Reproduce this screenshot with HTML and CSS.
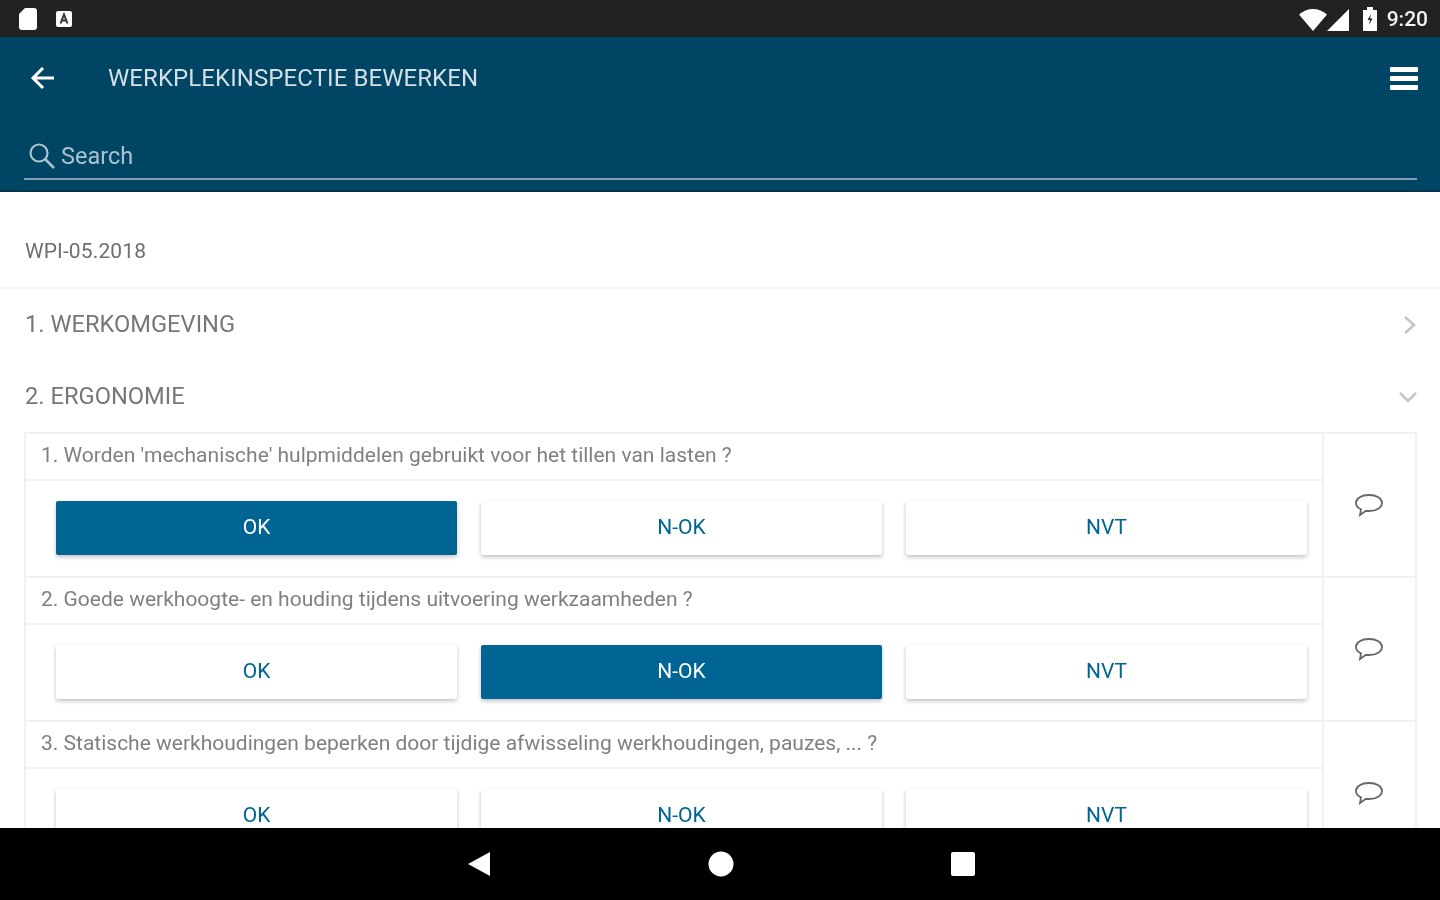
FILE: index.html
```html
<!DOCTYPE html>
<html lang="en">
<head>
    <meta charset="UTF-8">
    <meta name="viewport" content="width=device-width, initial-scale=1.0">
    <title>Werkplekinspectie bewerken</title>
    <link rel="stylesheet" href="styles.css">
</head>
<body>

    <div class="status-bar">
        <div class="status-left">
            <svg width="22" height="24" viewBox="0 0 22 24"><path d="M8 1h9a3 3 0 0 1 3 3v16a3 3 0 0 1-3 3H5a3 3 0 0 1-3-3V7z" fill="#fff"/></svg>
            <svg width="20" height="20" viewBox="0 0 20 20"><rect x="2" y="2" width="16" height="16" rx="2" fill="#fff"/><path d="M6.500 14.500 10 5.500l3.500 9M8 11.500h4" fill="none" stroke="#333" stroke-width="2"/></svg>
        </div>
        <div class="status-right">
            <svg width="30" height="24" viewBox="0 0 30 24"><path d="M1 7.500C9 0 21 0 29 7.500L15 24z" fill="#fff"/></svg>
            <svg class="signal-icon" width="24" height="24" viewBox="0 0 24 24"><path d="M1 24 23 2v22z" fill="#fff"/></svg>
            <svg class="battery-icon" width="18" height="26" viewBox="0 0 18 26"><path d="M6 1h6v3h4v21H2V4h4z" fill="#fff"/><path d="M10 8 6.500 14H9l-1 5 3.500-6.500H9z" fill="#222"/></svg>
            <span class="clock">9:20</span>
        </div>
    </div>

    <header class="app-header">
        <div class="title-row">
            <svg class="back-icon" width="26" height="26" viewBox="0 0 26 26"><path d="M24 13H3M13 3 3 13l10 10" fill="none" stroke="#fff" stroke-width="3"/></svg>
            <h1>WERKPLEKINSPECTIE BEWERKEN</h1>
            <div class="menu-icon"><span></span><span></span><span></span></div>
        </div>
        <div class="search-row">
            <svg width="28" height="28" viewBox="0 0 28 28"><circle cx="11" cy="11" r="8.500" fill="none" stroke="#a9c3d0" stroke-width="2.200"/><path d="m17 17 9 9" stroke="#a9c3d0" stroke-width="2.600"/></svg>
            <span>Search</span>
        </div>
    </header>

    <main class="content">
        <div class="form-code">WPI-05.2018</div>

        <div class="section-row">
            <span class="section-name">1. WERKOMGEVING</span>
            <svg width="14" height="20" viewBox="0 0 14 20"><path d="m2 2 9 8-9 8" fill="none" stroke="#c4c4c4" stroke-width="2.500"/></svg>
        </div>
        <div class="section-row">
            <span class="section-name">2. ERGONOMIE</span>
            <svg class="chevron-down" width="20" height="14" viewBox="0 0 20 14"><path d="m2 3 8 8 8-8" fill="none" stroke="#c4c4c4" stroke-width="2.500"/></svg>
        </div>

        <div class="question-list">
            <div class="question">
                <div class="question-main">
                    <div class="question-text">1. Worden 'mechanische' hulpmiddelen gebruikt voor het tillen van lasten ?</div>
                    <div class="answers">
                        <button class="answer selected">OK</button>
                        <button class="answer">N-OK</button>
                        <button class="answer">NVT</button>
                    </div>
                </div>
                <div class="question-comment">
                    <svg width="32" height="28" viewBox="0 0 32 28"><path d="M16 3C8.500 3 3 6.500 3 11c0 2.800 2 5 5 6.300L7 23l6-4.200c1 .2 2 .2 3 .2 7.500 0 13-3.500 13-8s-5.500-8-13-8z" fill="none" stroke="#666" stroke-width="1.800"/></svg>
                </div>
            </div>
            <div class="question">
                <div class="question-main">
                    <div class="question-text">2. Goede werkhoogte- en houding tijdens uitvoering werkzaamheden ?</div>
                    <div class="answers">
                        <button class="answer">OK</button>
                        <button class="answer selected">N-OK</button>
                        <button class="answer">NVT</button>
                    </div>
                </div>
                <div class="question-comment">
                    <svg width="32" height="28" viewBox="0 0 32 28"><path d="M16 3C8.500 3 3 6.500 3 11c0 2.800 2 5 5 6.300L7 23l6-4.200c1 .2 2 .2 3 .2 7.500 0 13-3.500 13-8s-5.500-8-13-8z" fill="none" stroke="#666" stroke-width="1.800"/></svg>
                </div>
            </div>
            <div class="question">
                <div class="question-main">
                    <div class="question-text">3. Statische werkhoudingen beperken door tijdige afwisseling werkhoudingen, pauzes, ... ?</div>
                    <div class="answers">
                        <button class="answer">OK</button>
                        <button class="answer">N-OK</button>
                        <button class="answer">NVT</button>
                    </div>
                </div>
                <div class="question-comment">
                    <svg width="32" height="28" viewBox="0 0 32 28"><path d="M16 3C8.500 3 3 6.500 3 11c0 2.800 2 5 5 6.300L7 23l6-4.200c1 .2 2 .2 3 .2 7.500 0 13-3.500 13-8s-5.500-8-13-8z" fill="none" stroke="#666" stroke-width="1.800"/></svg>
                </div>
            </div>
        </div>
    </main>

    <nav class="nav-bar">
        <svg width="24" height="26" viewBox="0 0 24 26"><path d="M23 1v24L1 13z" fill="#fff"/></svg>
        <svg width="26" height="26" viewBox="0 0 26 26"><circle cx="13" cy="13" r="12.500" fill="#fff"/></svg>
        <svg width="24" height="24" viewBox="0 0 24 24"><rect x="0" y="0" width="24" height="24" rx="2" fill="#fff"/></svg>
    </nav>

</body>
</html>
```

FILE: styles.css
```css
* {
    margin: 0;
    padding: 0;
    box-sizing: border-box;
    font-family: Roboto, "Liberation Sans", sans-serif;
}

body {
    width: 1440px;
    height: 900px;
    display: flex;
    flex-direction: column;
    overflow: hidden;
    background-color: #fff;
    /* the reference is an upscaled, soft screenshot */
    filter: blur(0.6px);
}

svg {
    display: block;
    flex-shrink: 0;
}

/* status bar */
.status-bar {
    height: 37px;
    flex-shrink: 0;
    display: flex;
    justify-content: space-between;
    align-items: center;
    padding: 0 12px 0 17px;
    background-color: #222;
}

.status-left,
.status-right {
    display: flex;
    align-items: center;
}

.status-left {
    gap: 15px;
}

.signal-icon {
    margin-left: -2px;
}

.battery-icon {
    margin-left: 11px;
}

.clock {
    margin-left: 8px;
    font-size: 21px;
    font-weight: 500;
    color: #f2f2f2;
}

/* header */
.app-header {
    height: 155px;
    flex-shrink: 0;
    display: flex;
    flex-direction: column;
    background-color: #004563;
    border-bottom: 2px solid #00334c;
}

.title-row {
    height: 82px;
    display: flex;
    align-items: center;
    padding: 0 22px 0 30px;
}

.back-icon {
    margin-right: 52px;
}

.title-row h1 {
    flex: 1;
    font-size: 24px;
    font-weight: 400;
    letter-spacing: 0.08px;
    color: #d4dfe6;
}

.menu-icon {
    width: 28px;
    display: flex;
    flex-direction: column;
    gap: 4px;
}

.menu-icon span {
    height: 5px;
    border-radius: 1px;
    background-color: #fff;
}

.search-row {
    height: 61px;
    margin: 0 23px 0 24px;
    padding: 14px 0 0 4px;
    display: flex;
    align-items: center;
    gap: 5px;
    border-bottom: 2px solid #7fa2b3;
    font-size: 23.5px;
    color: #a9c3d0;
}

/* content */
.content {
    flex: 1;
    overflow: hidden;
    background-color: #fff;
}

.form-code {
    height: 97px;
    display: flex;
    align-items: center;
    padding: 22px 0 0 25px;
    border-bottom: 2px solid #f4f4f4;
    font-size: 21px;
    letter-spacing: 0.12px;
    color: #6f6f6f;
}

.section-row {
    height: 72px;
    display: flex;
    justify-content: space-between;
    align-items: center;
    padding: 0 23px 0 25px;
    font-size: 23.7px;
    color: #777;
}

.section-name {
    margin-bottom: 2px;
}

.chevron-down {
    margin-right: -1px;
}

.question-list {
    margin: -1px 23px 0 24px;
    border-top: 2px solid #f1f1f1;
    border-left: 2px solid #f1f1f1;
    border-right: 2px solid #f1f1f1;
}

.question {
    height: 144px;
    display: flex;
    border-bottom: 2px solid #f1f1f1;
}

.question-main {
    flex: 1;
}

.question-text {
    height: 47px;
    display: flex;
    align-items: center;
    padding: 0 0 3px 15px;
    border-bottom: 2px solid #f1f1f1;
    font-size: 21px;
    color: #808080;
}

.answers {
    display: flex;
    gap: 24px;
    padding: 20px 15px 0 30px;
}

.answer {
    flex: 1;
    height: 54px;
    padding-bottom: 2px;
    border: none;
    border-radius: 2px;
    background-color: #fff;
    box-shadow: 0 2px 4px rgba(0, 0, 0, 0.25);
    font-size: 21px;
    color: #006595;
}

.answer.selected {
    background-color: #006595;
    color: #fff;
}

.question-comment {
    width: 93px;
    flex-shrink: 0;
    display: flex;
    justify-content: center;
    padding: 58px 2px 0 0;
    border-left: 2px solid #f1f1f1;
}

/* android nav bar */
.nav-bar {
    height: 72px;
    flex-shrink: 0;
    display: flex;
    justify-content: center;
    align-items: center;
    gap: 217px;
    padding-left: 1px;
    background-color: #000;
}
```
